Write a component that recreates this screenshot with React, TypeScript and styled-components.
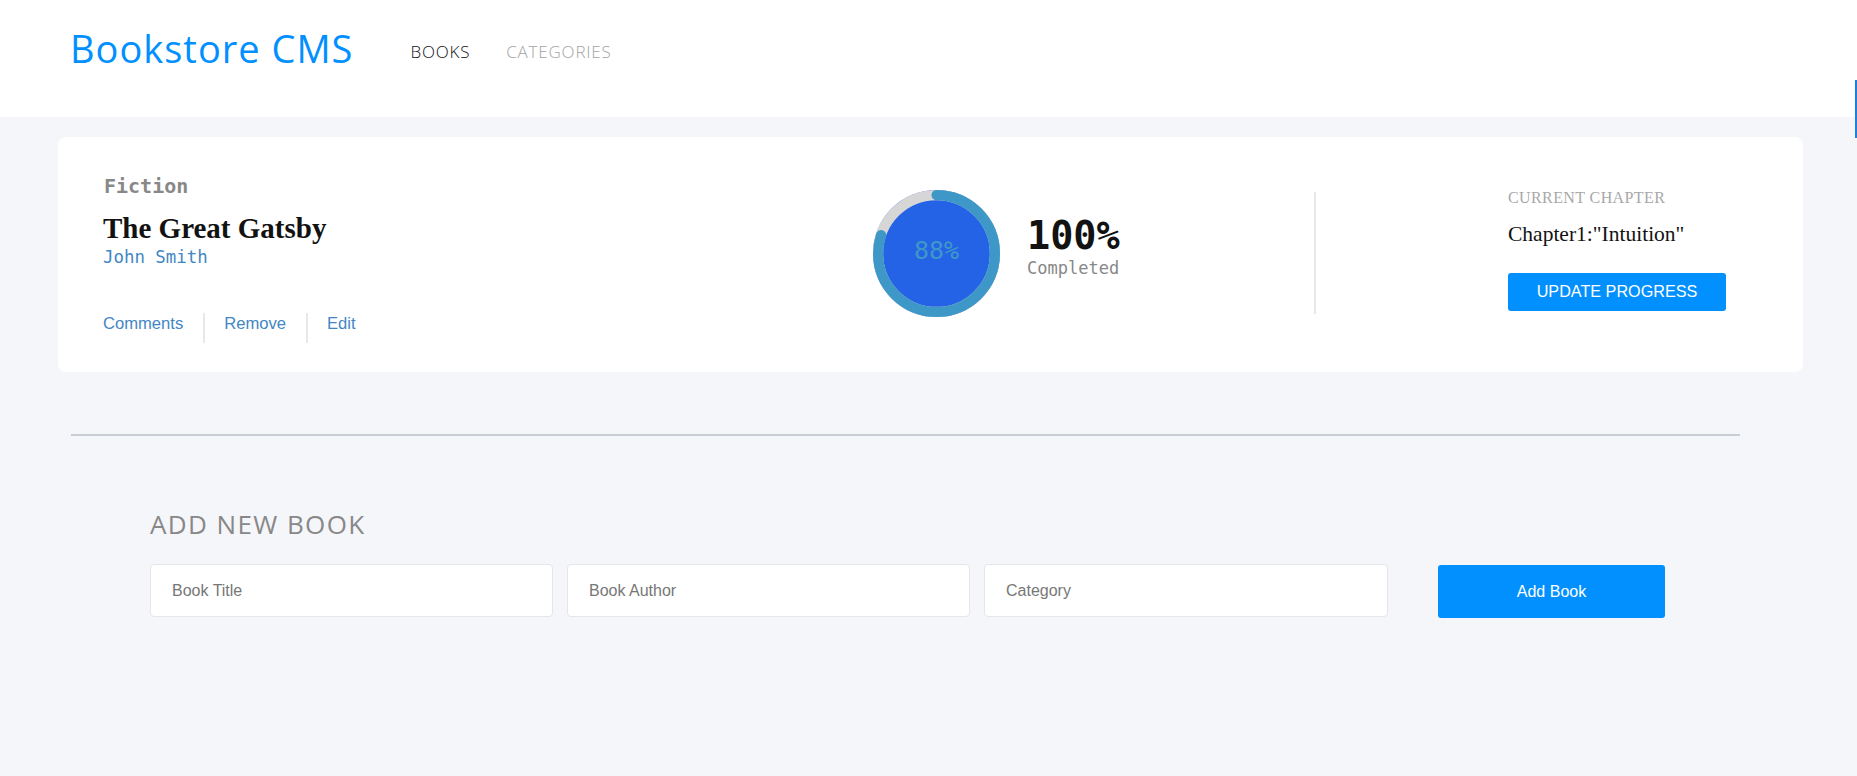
import React from "react";
import styled, { createGlobalStyle } from "styled-components";

const GlobalStyle = createGlobalStyle`
  html, body {
    margin: 0;
    padding: 0;
    background: #f5f6fa;
    font-family: "Liberation Sans", Arial, sans-serif;
  }
  * { box-sizing: border-box; }
`;

const Page = styled.div`
  position: relative;
  min-height: 100vh;
  background: #f5f6fa;
  overflow: hidden;
`;

const EdgeMarker = styled.div`
  position: absolute;
  right: 0;
  top: 80px;
  width: 2px;
  height: 58px;
  background: #1f7fe0;
`;

const Header = styled.header`
  height: 117px;
  background: #ffffff;
  display: flex;
  align-items: flex-start;
  padding: 26px 70px 0;
`;

const Logo = styled.h1`
  margin: 0;
  font-family: "Open Sans", sans-serif;
  font-weight: 400;
  font-size: 38px;
  line-height: 44px;
  letter-spacing: 1px;
  color: #0290ff;
`;

const Nav = styled.nav`
  display: flex;
  gap: 36px;
  margin: 16px 0 0 57px;
`;

const NavLink = styled.a<{ $active?: boolean }>`
  font-family: "Open Sans", sans-serif;
  font-weight: 300;
  font-size: 17px;
  line-height: 20px;
  letter-spacing: 0.8px;
  text-transform: uppercase;
  text-decoration: none;
  color: ${(p) => (p.$active ? "#121212" : "#a3a3a3")};
`;

const Main = styled.main`
  padding: 20px 54px 0 58px;
`;

const Card = styled.section`
  background: #ffffff;
  border-radius: 8px;
  display: flex;
  align-items: center;
  padding: 38px 76px 29px 45px;
`;

const BookInfo = styled.div`
  flex: 1;
  display: flex;
  flex-direction: column;
`;

const Genre = styled.div`
  font-family: "DejaVu Sans Mono", monospace;
  font-weight: 700;
  font-size: 20px;
  line-height: 22px;
  color: #888888;
  padding-left: 1px;
`;

const Title = styled.h2`
  margin: 16px 0 0;
  font-family: "Liberation Serif", serif;
  font-weight: 700;
  font-size: 29px;
  line-height: 30px;
  color: #121212;
`;

const Author = styled.div`
  margin-top: 4px;
  font-family: "DejaVu Sans Mono", monospace;
  font-size: 17.4px;
  line-height: 20px;
  color: #4386c5;
`;

const Actions = styled.div`
  display: flex;
  margin-top: 46px;
`;

const ActionButton = styled.button<{ $last?: boolean }>`
  background: none;
  border: none;
  border-right: ${(p) => (p.$last ? "none" : "2px solid #e8e8e8")};
  padding: 2px 20px 10px 19px;
  font-family: "Liberation Sans", Arial, sans-serif;
  font-size: 16.6px;
  line-height: 18px;
  color: #4386c5;
  cursor: pointer;
  &:first-child {
    padding-left: 0;
  }
`;

const ProgressSection = styled.div`
  width: 441px;
  display: flex;
  align-items: center;
  gap: 27px;
  margin-bottom: 12px;
`;

const ProgressText = styled.div`
  display: flex;
  flex-direction: column;
  margin-bottom: 14px;
`;

const Percent = styled.div`
  font-family: "DejaVu Sans Mono", monospace;
  font-weight: 700;
  font-size: 38.5px;
  line-height: 44px;
  color: #121212;
`;

const Completed = styled.div`
  font-family: "DejaVu Sans Mono", monospace;
  font-size: 17px;
  line-height: 21px;
  color: #888888;
`;

const Divider = styled.div`
  width: 2px;
  height: 122px;
  background: #e8e8e8;
  margin-bottom: 12px;
`;

const ChapterSection = styled.div`
  margin-left: 192px;
  width: 219px;
  display: flex;
  flex-direction: column;
  margin-bottom: 19px;
`;

const ChapterLabel = styled.div`
  font-family: "Liberation Serif", serif;
  font-size: 16px;
  line-height: 18px;
  letter-spacing: 0.4px;
  color: #a8a8a8;
  text-transform: uppercase;
`;

const ChapterName = styled.div`
  margin-top: 15px;
  font-family: "Liberation Serif", serif;
  font-size: 21.5px;
  line-height: 24px;
  color: #121212;
`;

const PrimaryButton = styled.button<{ $width: number; $height: number }>`
  width: ${(p) => p.$width}px;
  height: ${(p) => p.$height}px;
  border: none;
  border-radius: 3px;
  background: #0290ff;
  color: #ffffff;
  font-family: "Liberation Sans", Arial, sans-serif;
  font-size: 16px;
  cursor: pointer;
`;

const UpdateButton = styled(PrimaryButton)`
  margin-top: 27px;
  text-transform: uppercase;
  font-size: 16.2px;
`;

const Rule = styled.hr`
  margin: 62px 63px 0 13px;
  border: none;
  height: 2px;
  background: #c8cdd6;
`;

const FormSection = styled.section`
  padding-left: 92px;
`;

const FormTitle = styled.h3`
  margin: 72px 0 0;
  font-family: "Open Sans", sans-serif;
  font-weight: 400;
  font-size: 26px;
  line-height: 32px;
  letter-spacing: 1.4px;
  color: #888888;
  text-transform: uppercase;
`;

const Form = styled.form`
  margin-top: 24px;
  display: grid;
  grid-template-columns: 403px 403px 404px 227px;
  column-gap: 14px;
  align-items: start;
`;

const Input = styled.input`
  height: 53px;
  border: 1px solid #e6e6e6;
  border-radius: 4px;
  background: #ffffff;
  padding: 0 21px;
  font-family: "Liberation Sans", Arial, sans-serif;
  font-size: 16px;
  color: #121212;
  outline: none;
  &::placeholder {
    color: #777777;
  }
`;

const AddButton = styled(PrimaryButton)`
  margin: 1px 0 0 36px;
`;

function ProgressRing({ value, label }: { value: number; label: string }) {
  const r = 46;
  const c = 2 * Math.PI * r;
  const offset = c * (1 - value);
  return (
    <svg width="127" height="127" viewBox="0 0 100 100">
      <circle cx="50" cy="50" r="50" fill="#2563e6" />
      <circle cx="50" cy="50" r={r} fill="none" stroke="#d6d6d6" strokeWidth="8" />
      <path
        d={`M 50,50 m 0,-${r} a ${r},${r} 0 1 1 0,${2 * r} a ${r},${r} 0 1 1 0,-${2 * r}`}
        fill="none"
        stroke="#3e98c7"
        strokeWidth="8"
        strokeLinecap="round"
        strokeDasharray={`${c} ${c}`}
        strokeDashoffset={offset}
      />
      <text
        x="50"
        y="54.5"
        textAnchor="middle"
        fill="#3e98c7"
        fontFamily="DejaVu Sans Mono, monospace"
        fontSize="19.7"
      >
        {label}
      </text>
    </svg>
  );
}

export default function App() {
  return (
    <Page>
      <GlobalStyle />
      <EdgeMarker />
      <Header>
        <Logo>Bookstore CMS</Logo>
        <Nav>
          <NavLink href="#" $active>
            Books
          </NavLink>
          <NavLink href="#">Categories</NavLink>
        </Nav>
      </Header>
      <Main>
        <Card>
          <BookInfo>
            <Genre>Fiction</Genre>
            <Title>The Great Gatsby</Title>
            <Author>John Smith</Author>
            <Actions>
              <ActionButton type="button">Comments</ActionButton>
              <ActionButton type="button">Remove</ActionButton>
              <ActionButton type="button" $last>
                Edit
              </ActionButton>
            </Actions>
          </BookInfo>
          <ProgressSection>
            <ProgressRing value={0.8} label="88%" />
            <ProgressText>
              <Percent>100%</Percent>
              <Completed>Completed</Completed>
            </ProgressText>
          </ProgressSection>
          <Divider />
          <ChapterSection>
            <ChapterLabel>Current Chapter</ChapterLabel>
            <ChapterName>Chapter1:"Intuition"</ChapterName>
            <UpdateButton type="button" $width={218} $height={38}>
              Update progress
            </UpdateButton>
          </ChapterSection>
        </Card>
        <Rule />
        <FormSection>
          <FormTitle>Add new book</FormTitle>
          <Form onSubmit={(e) => e.preventDefault()}>
            <Input placeholder="Book Title" />
            <Input placeholder="Book Author" />
            <Input placeholder="Category" />
            <AddButton type="submit" $width={227} $height={53}>
              Add Book
            </AddButton>
          </Form>
        </FormSection>
      </Main>
    </Page>
  );
}
